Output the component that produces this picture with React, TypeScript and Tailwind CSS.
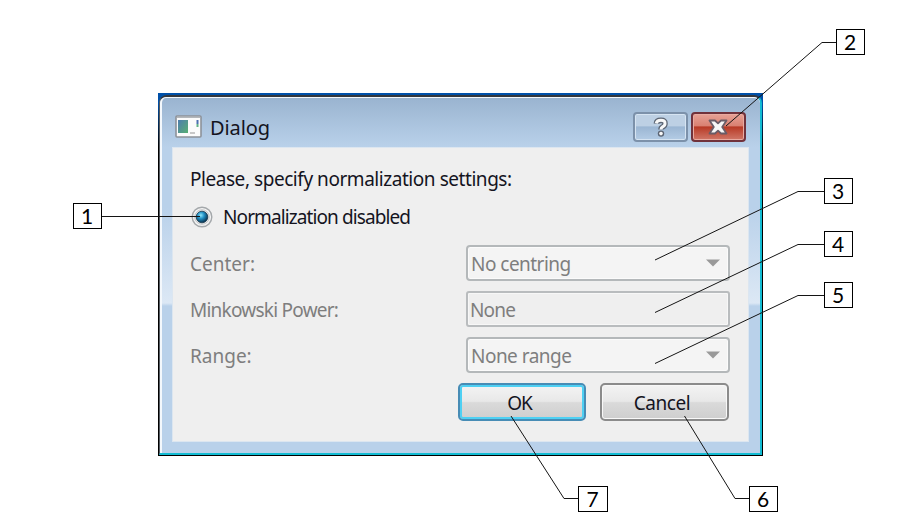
import React from "react";

const font = "font-['Noto_Sans','Open_Sans',sans-serif]";

function Label({ children, className = "" }: { children: React.ReactNode; className?: string }) {
  return <span className={`block whitespace-nowrap leading-6 ${className}`}>{children}</span>;
}

function Arrow() {
  return (
    <svg width="14" height="8" viewBox="0 0 14 8" className="mr-[8px] mb-px">
      <path d="M0 0.5H14L7 7.5Z" fill="#999999" />
    </svg>
  );
}

function Select({ children }: { children: React.ReactNode }) {
  return (
    <div className="flex h-[36px] w-[264px] items-center justify-between rounded-[4px] border-2 border-[#b4b8ba] bg-[#f4f4f4] pl-[3px] shadow-[inset_0_0_0_1px_#fbfbfb]">
      {children}
      <Arrow />
    </div>
  );
}

function Callout({ n, className }: { n: number; className: string }) {
  return (
    <div className={`absolute flex h-[26px] w-[29px] items-center justify-center border border-black bg-white pr-px pb-[2px] font-['Lato',sans-serif] text-[21px] leading-none text-black ${className}`}>
      {n}
    </div>
  );
}

export default function App() {
  return (
    <main className={`relative h-[527px] w-[922px] overflow-hidden bg-white ${font} text-[19px] text-[#14141e]`}>
      <section className="absolute top-[93px] left-[158px] h-[363px] w-[605px] bg-[linear-gradient(#0050a8_0_10px,#000_54px)] pt-[2px] pr-px pb-px pl-px">
        <div className="h-full rounded-t-[8px] border-t-2 border-r-2 border-b-2 border-l border-t-[#33373d] border-r-[#12bcd3] border-b-[#12bcd3] border-l-[#555b61] bg-[#b9d1ea]">
          <div className="flex h-full flex-col rounded-t-[6px] border-t border-l-2 border-[#f4f8fc] bg-[linear-gradient(#9ab4d0_0,#b9d1ea_49px,#b9d1ea_110px,#dce8f5_205px,#b9d1ea_208px)] pr-[11px] pl-[10px]">
            <header className="flex h-[49px] shrink-0 items-center pt-[9px]">
              <svg width="27" height="24" viewBox="0 0 27 24" className="ml-[3px]">
                <defs>
                  <linearGradient id="picture" x1="0" y1="0" x2="1" y2="1">
                    <stop offset="0" stopColor="#4d7caf" />
                    <stop offset="1" stopColor="#58af72" />
                  </linearGradient>
                </defs>
                <rect x="1" y="1" width="25" height="21" rx="1" fill="#fbfbfb" stroke="#8d9299" strokeWidth="1.6" />
                <path d="M2 2.5H25" stroke="#b3b7bb" />
                <rect x="3" y="5" width="10" height="13" fill="url(#picture)" />
                <path d="M22.5 5v4" stroke="#4c70b0" strokeWidth="2" />
                <path d="M22.5 9v3" stroke="#62b287" strokeWidth="2" />
                <path d="M15 18h5" stroke="#c8c8c8" strokeWidth="2" />
              </svg>
              <Label className="ml-[8px] pt-px text-[20px] tracking-[-0.1px]">Dialog</Label>
              <div className="mr-[3px] ml-auto flex gap-[3px] pb-px">
                <button className="flex h-[30px] w-[55px] items-center justify-center rounded-[4px] border-2 border-[#7c91aa] bg-[linear-gradient(#bdd0e4_0_45%,#9bb6d3_50%,#b4cce5)] shadow-[inset_0_0_0_1px_#d6e4f2]">
                  <svg width="16" height="20" viewBox="0 0 16 20" fill="none">
                    <path d="M3.4 6.6Q3.6 3.4 8 3.4T12 6.6Q12 8.8 9.6 10Q8 10.8 8 12.5" stroke="#5c6573" strokeWidth="5.6" />
                    <circle cx="8" cy="16.6" r="3.2" fill="#5c6573" />
                    <path d="M3.2 6.4Q3.8 3.2 8 3.2T12 6.4Q12 8.6 9.6 9.8Q8 10.8 8 12.6" stroke="#f8f8f8" strokeWidth="3" />
                    <circle cx="8" cy="16.6" r="1.8" fill="#f8f8f8" />
                  </svg>
                </button>
                <button className="flex h-[30px] w-[55px] items-center justify-center rounded-[4px] border-2 border-[#71323b] bg-[linear-gradient(#e7a296_0,#d98172_45%,#b83a26_50%,#d07768)] pr-[2px] shadow-[inset_0_0_0_1px_#e9aaa0]">
                  <svg width="20" height="16" viewBox="0 0 20 16">
                    <path d="M1.5 1.5H7L10 4.3L13 1.5H18.5L14.2 8L18.5 14.5H13L10 11.7L7 14.5H1.5L5.8 8Z" fill="#f7f7f7" stroke="#6b5c67" strokeWidth="1.8" strokeLinejoin="round" />
                  </svg>
                </button>
              </div>
            </header>
            <div className="flex h-[295px] flex-col border border-[#dce6f0] bg-[#efefef] pt-[19px] pr-[18px] pl-[17px]">
              <Label className="tracking-[-0.45px]">Please, specify normalization settings:</Label>
              <div className="mt-[14px] flex h-6 items-center">
                <svg width="22" height="22" viewBox="0 0 22 22" className="ml-[1px]">
                  <defs>
                    <radialGradient id="dot" cx=".4" cy=".35" r=".65">
                      <stop offset="0" stopColor="#8be5fa" />
                      <stop offset=".45" stopColor="#208fc4" />
                      <stop offset="1" stopColor="#082f4b" />
                    </radialGradient>
                  </defs>
                  <circle cx="11" cy="11" r="9.8" fill="#f4f4f4" stroke="#a4a8ab" strokeWidth="1.4" />
                  <circle cx="11" cy="11" r="7.3" fill="#e6e6e6" stroke="#c7c9cb" />
                  <circle cx="11" cy="11" r="5.8" fill="url(#dot)" stroke="#173a50" strokeWidth=".8" />
                </svg>
                <Label className="ml-[10px] tracking-[-0.9px]">Normalization disabled</Label>
              </div>
              <div className="mt-[16px] flex flex-col gap-[10px] text-[#7e7e7e]">
                <div className="flex h-[36px] items-center justify-between">
                  <Label className="pt-[2px]">Center:</Label>
                  <Select><Label className="pt-[2px] tracking-[-0.53px]">No centring</Label></Select>
                </div>
                <div className="flex h-[36px] items-center justify-between">
                  <Label className="pt-[2px] tracking-[-0.76px]">Minkowski Power:</Label>
                  <div className="flex h-[36px] w-[264px] items-center rounded-[3px] border-2 border-[#b9bcbe] bg-[#efefef] pl-[2px] shadow-[inset_0_0_0_1px_#f7f7f7]">
                    <Label className="pt-[2px] tracking-[-0.85px]">None</Label>
                  </div>
                </div>
                <div className="flex h-[36px] items-center justify-between">
                  <Label className="pt-[2px]">Range:</Label>
                  <Select><Label className="pt-[2px] tracking-[-0.52px]">None range</Label></Select>
                </div>
              </div>
              <div className="mt-[10px] mr-px flex justify-end gap-[14px]">
                <button className="flex h-[38px] w-[128px] items-center justify-center rounded-[5px] border-2 border-[#478cb5] bg-[linear-gradient(#f4f4f4,#e8e8e8_48%,#dadada_52%,#cecece)] pt-px pr-[5px] shadow-[inset_0_0_0_2px_#4ed0f3]">
                  <Label className="tracking-[-1px]">OK</Label>
                </button>
                <button className="flex h-[38px] w-[129px] items-center justify-center rounded-[5px] border-2 border-[#8b8b8b] bg-[linear-gradient(#f3f3f3,#e8e8e8_48%,#dadada_52%,#cecece)] pt-px pr-[5px] shadow-[inset_0_0_0_1px_#f8f8f8]">
                  <Label className="tracking-[-0.4px]">Cancel</Label>
                </button>
              </div>
            </div>
          </div>
        </div>
      </section>
      <svg className="absolute inset-0" width="922" height="527" viewBox="0 0 922 527" fill="none" stroke="#141414" strokeWidth="1">
        <path d="M101 216.5H200M836 42.5H822L726 126M825 191.5H798L655 260M825 244.5H798L655 312.5M825 295.5H798L655 363.5M750 498.5H735L684.5 416M579 498.5H564L511 416" />
      </svg>
      <Callout n={1} className="top-[203px] left-[73px]" />
      <Callout n={2} className="top-[29px] left-[836px]" />
      <Callout n={3} className="top-[178px] left-[824px]" />
      <Callout n={4} className="top-[231px] left-[824px]" />
      <Callout n={5} className="top-[282px] left-[824px]" />
      <Callout n={6} className="top-[486px] left-[749px]" />
      <Callout n={7} className="top-[486px] left-[578px] w-[30px]" />
    </main>
  );
}
